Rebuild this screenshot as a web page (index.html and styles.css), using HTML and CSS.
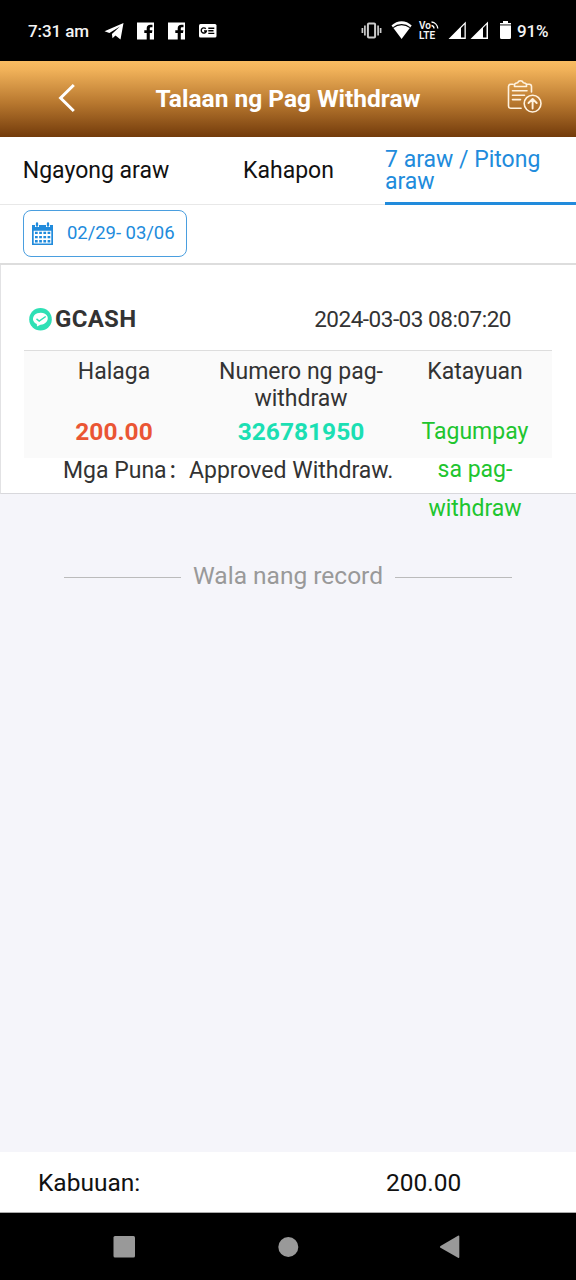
FILE: index.html
```html
<!DOCTYPE html>
<html lang="fil">
<head>
<meta charset="utf-8">
<title>Talaan ng Pag Withdraw</title>
<link rel="stylesheet" href="styles.css">
</head>
<body>
<div class="screen">
  <div class="status-bar">
    <span class="clock">7:31 am</span>
    <svg class="notifications" width="114" height="20" viewBox="104 21 114 20">
      <path fill="#fff" d="M104.500 31.200 123.500 23l-3 16.500-5-4-3 2.800-.6-4.200 8-7.500-10.500 6.500z"/>
      <path id="fb" fill="#fff" d="M137 22.500h17v17h-4.200v-6.500h2.200l.4-2.700H149.800v-1.700c0-1 .5-1.400 1.400-1.400h1.300v-2.400h-2.200c-2.300 0-3.600 1.400-3.600 3.600v1.900h-2.400v2.700h2.400v6.500H137z"/>
      <use href="#fb" x="31"/>
      <rect x="199" y="24" width="17.500" height="13.500" rx="1.500" fill="#fff"/>
      <path fill="none" stroke="#000" stroke-width="1.400" d="M205.800 28.700a2.600 2.600 0 1 0 .6 2.300h-2.400M208.300 28.200h6M208.300 30.800h5.200M208.300 33.400h6"/>
    </svg>
    <div class="signals">
      <svg width="52" height="20" viewBox="361 21 52 20">
        <path fill="none" stroke="#ccc" stroke-width="1.700" d="M362.400 28v5M364.900 25.500v10M378.100 25.500v10M380.600 28v5"/>
        <rect x="367.900" y="23.600" width="7.200" height="13.800" rx="1" fill="none" stroke="#ccc" stroke-width="2"/>
        <path fill="#fff" d="M391.500 25.600c5.800-5.800 14.400-5.800 20.200 0L401.600 39z"/>
        <path fill="none" stroke="#000" stroke-width="1.200" d="M393.200 27.600c5-4.100 11.800-4.100 16.800 0"/>
      </svg>
      <div class="volte"><span>Vo<svg width="8" height="8" viewBox="0 0 8 8"><path d="M.5 4.500a3 3 0 0 1 2.500 3M.5 1a7 7 0 0 1 6.300 6.500" fill="none" stroke="#fff" stroke-width="1.300"/></svg></span><span>LTE</span></div>
      <svg width="63" height="20" viewBox="448 21 63 20">
        <path fill="#fff" fill-rule="evenodd" d="M448.500 39 465.800 21.500V39zM461 28v9.600h3.500V24.600zM470.500 39 488 21.500V39zM483 28v9.600h3.500V24.600z"/>
        <path fill="#fff" d="M503 21h5v2h3v1.300h-11V23h3zM500 26h11v11.500q0 1.500-1.500 1.500h-8q-1.500 0-1.500-1.500z"/>
        <path fill="#999" d="M500 24.300h11V26h-11z"/>
      </svg>
      <span class="battery">91%</span>
    </div>
  </div>

  <header class="title-bar">
    <svg class="back" width="20" height="32" viewBox="0 0 20 32"><path d="M18.800 3 5.600 16l13.200 13" fill="none" stroke="#fff" stroke-width="3"/></svg>
    <h1>Talaan ng Pag Withdraw</h1>
    <svg class="records" width="36" height="36" viewBox="507 79 36 36" fill="none" stroke="#fff2df" stroke-width="1.600" stroke-linecap="round" stroke-linejoin="round">
      <path d="M513 84.300h-2.200q-2.300 0-2.300 2.300v19.300q0 2.300 2.300 2.300h10.300M527 84.300h2.200q2.300 0 2.300 2.300V92M514.500 86.500v-2.200q1-1.300 3-1.500 1-2 3-2t3 2q2 .2 3 1.500v2.200zM512.500 90.800h14.500M512.500 95.300h12M512.500 99.600h8"/>
      <circle cx="532.600" cy="103.600" r="8.400"/>
      <path d="M532.600 108.500v-9M528.500 103l4.100-4 4.100 4" stroke-width="1.900"/>
    </svg>
  </header>

  <nav class="tabs">
    <div class="tab">Ngayong araw</div>
    <div class="tab">Kahapon</div>
    <div class="tab active">7 araw / Pitong araw</div>
  </nav>

  <div class="filter">
    <div class="date-range">
      <svg width="21" height="24" viewBox="0 0 21 24">
        <path fill="#218bdc" fill-rule="evenodd" d="M0 3h3v2h4V3h7v2h4V3h3v20H0zM1.700 8.700v12.700h17.600V8.700z"/>
        <path fill="none" stroke="#218bdc" stroke-width="2.300" stroke-linecap="round" d="M5 1.500v2.200M16 1.500v2.200"/>
        <path fill="none" stroke="#218bdc" stroke-width="2.400" stroke-dasharray="2.700 1.500" d="M3 10.900h15.300M3 15.100h15.300M3 19.200h15.300"/>
      </svg>
      <span>02/29- 03/06</span>
    </div>
  </div>

  <main class="records-list">
    <article class="card">
      <div class="card-head">
        <svg width="24" height="24" viewBox="0 0 24 24">
          <circle cx="11.500" cy="12.300" r="11.300" fill="#2ee0b5"/>
          <path fill="#fff" d="M5.500 8c3.500-3.500 11.500-3 13 1.500 1.300 4-2 8-7 8.200L8 19.500l-.2-2.500C3.500 15 3 11 5.500 8z"/>
          <path d="m7.500 11.800 2.700 2.200 6.500-4.500" fill="none" stroke="#2ee0b5" stroke-width="1.500"/>
        </svg>
        <strong>GCASH</strong>
        <time>2024-03-03 08:07:20</time>
      </div>
      <div class="details">
        <div class="cell"><div class="label">Halaga</div><div class="value amount">200.00</div></div>
        <div class="cell"><div class="label">Numero ng pag-withdraw</div><div class="value number">326781950</div></div>
        <div class="cell"><div class="label">Katayuan</div><div class="value state">Tagumpay sa pag-withdraw</div></div>
      </div>
      <div class="remark"><span class="remark-label">Mga Puna<span class="colon">:</span></span><span>Approved Withdraw.</span></div>
    </article>
    <div class="end"><span>Wala nang record</span></div>
  </main>

  <footer class="total"><span class="total-label">Kabuuan:</span><span class="total-value">200.00</span></footer>

  <div class="system-nav">
    <svg width="576" height="67" viewBox="0 0 576 67" fill="#999">
      <rect x="113.500" y="23" width="21.500" height="21.500" rx="1.500"/>
      <circle cx="288.300" cy="34" r="10"/>
      <path d="M440.500 33 458 22.800q1.300-.6 1.300.8v20.400q0 1.500-1.300.8L440.500 34.800q-1.300-.9 0-1.800z"/>
    </svg>
  </div>
</div>
</body>
</html>
```
FILE: styles.css
```css
* { box-sizing: border-box; }
body { margin: 0; font-family: Roboto, sans-serif; color: #111; background: #f5f5fa; }
svg { display: block; flex: none; }
.screen { width: 576px; height: 1280px; display: flex; flex-direction: column; overflow: hidden; }
.status-bar { height: 61px; flex: none; background: #000; color: #f4f4f4; display: flex; align-items: center; padding: 0 0 0 28px; font-size: 17px; }
.clock { width: 76px; font-weight: 500; letter-spacing: -.1px; white-space: nowrap; }
.signals { display: flex; align-items: center; margin-left: 143px; }
.volte { width: 29px; margin: 0 0 0 6px; font-size: 10px; line-height: 10px; font-weight: 600; display: flex; flex-direction: column; }
.volte span { display: flex; }
.signals .battery { margin-left: 6px; font-weight: 500; letter-spacing: -.2px; }
.title-bar { height: 76px; flex: none; background: linear-gradient(#f9bc62, #f0b159 12%, #b8782f 55%, #733b0b); display: flex; align-items: center; padding-left: 55px; color: #fff; }
.back { margin-bottom: 2px; }
.title-bar h1 { margin: 0; width: 426px; text-align: center; font-size: 24.500px; line-height: 28px; font-weight: 700; white-space: nowrap; }
.records { margin: 0 0 4px 6px; }
.tabs { height: 68px; flex: none; background: #fff; display: flex; border-bottom: 1px solid #e8e8e8; }
.tab { width: 192px; height: 68px; display: flex; align-items: center; justify-content: center; font-size: 23px; line-height: 22px; }
.tab:nth-child(2) { width: 193px; }
.tab.active { width: 191px; color: #218bdc; border-bottom: 3px solid #218bdc; padding-top: 2px; }
.filter { height: 60px; flex: none; background: #fff; border-bottom: 2px solid #ddd; padding: 5px 0 0 23px; }
.date-range { width: 164px; height: 47px; border: 1px solid #4a9edf; border-radius: 8px; display: flex; align-items: center; padding-left: 8px; color: #218bdc; font-size: 18.500px; }
.date-range span { margin-left: 14px; margin-top: -2px; white-space: nowrap; letter-spacing: -.05px; }
.records-list { flex: 1; background: #f5f5fa; }
.card { height: 229px; background: #fff; border-left: 1px solid #e2e2e4; border-bottom: 1px solid #d8d8dc; padding: 0 24px 0 23px; color: #333; }
.card-head { height: 85px; display: flex; align-items: center; padding: 23px 41px 0 5px; font-size: 24px; }
.card-head strong { margin-left: 2px; letter-spacing: .3px; }
.card-head time { margin-left: auto; font-size: 22.500px; letter-spacing: -.48px; white-space: nowrap; }
.details { height: 108px; border-top: 1px solid #ddd; background: #fafafa; display: grid; grid-template-columns: 180px 194px 154px; text-align: center; padding-top: 7px; }
.label { height: 55px; font-size: 23px; line-height: 27px; }
.value { height: 40px; font-size: 24.500px; line-height: 38.300px; font-weight: 700; }
.amount { color: #ea5534; }
.number { color: #1bdfb3; }
.state { color: #20c52e; font-size: 23px; font-weight: 400; padding: 0 20px; }
.remark { display: flex; height: 26px; padding: 1px 0 0 39px; font-size: 23px; line-height: 24px; white-space: nowrap; }
.remark-label { width: 126px; }
.colon { margin-left: 3px; font-weight: 500; }
.end { display: flex; align-items: center; gap: 12px; height: 30px; margin-top: 67px; padding: 0 64px; color: #999; font-size: 24.500px; }
.end span { margin-top: -2px; }
.end::before, .end::after { content: ""; flex: 1; height: 1px; margin-top: 2px; background: #bbb; }
.total { height: 61px; flex: none; display: flex; align-items: center; background: #fff; padding: 1px 0 0 38px; font-size: 24.500px; border-bottom: 1px solid #aaa; }
.total-label { width: 348px; }
.system-nav { height: 67px; flex: none; background: #000; }
```
